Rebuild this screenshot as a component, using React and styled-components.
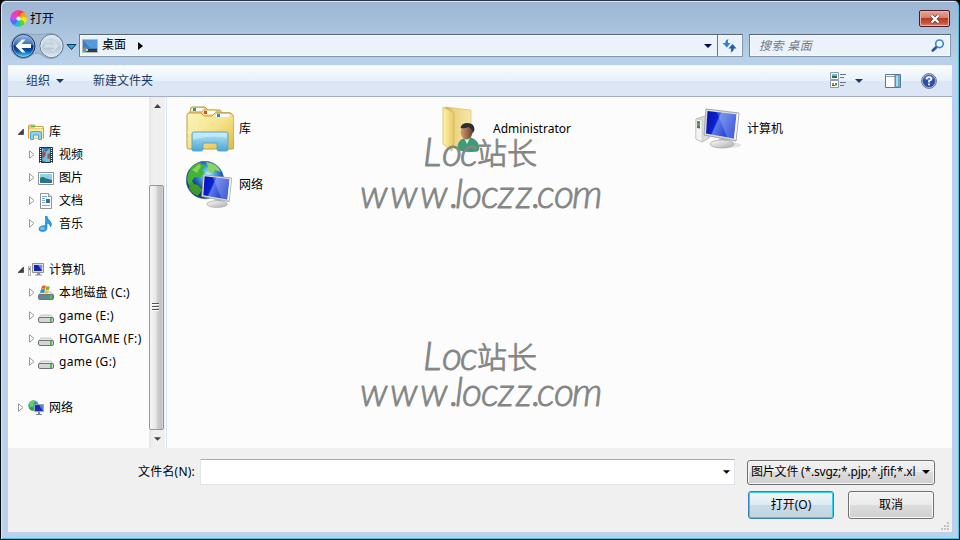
import React from "react";
import styled, { createGlobalStyle } from "styled-components";

const Global = createGlobalStyle`
  * { box-sizing: border-box; }
  body { margin: 0; background: #000; overflow: hidden; }
  svg { display: block; flex: none; }
`;

const Window = styled.div`
  position: relative;
  width: 960px;
  height: 540px;
  display: flex;
  flex-direction: column;
  padding: 1px 7px 7px 7px;
  border: 1px solid #07090c;
  border-top-color: #2b3440;
  border-radius: 6px 6px 0 0;
  background: linear-gradient(#9ab4d2 0, #a9c3de 28px, #b9d1ea 60px, #b9d1ea 100%);
  box-shadow: inset 1px 1px 0 #dbe8f5, inset -1px -1px 0 #35cbe6;
  font: 12px/16px "Noto Sans", "Noto Sans CJK SC", sans-serif;
  color: #000;
  white-space: nowrap;
`;

const TitleBar = styled.header`
  height: 31px;
  display: flex;
  align-items: flex-start;
  padding: 8px 0 0 2px;
`;
const TitleText = styled.span`
  margin-left: 3px;
  flex: 1;
  line-height: 17px;
`;
const CloseButton = styled.button`
  width: 31px;
  height: 17px;
  margin-right: 2px;
  padding: 0;
  display: grid;
  place-items: center;
  border: 1px solid #4e1a25;
  border-radius: 2px;
  background: linear-gradient(#e5a49b 0, #d4806f 46%, #ba3c25 50%, #c5543d 80%, #d98c76 100%);
  box-shadow: inset 0 0 0 1px #e8b4a8;
`;

const NavRow = styled.div`
  height: 32px;
  display: flex;
  align-items: flex-start;
`;
const Field = styled.div`
  display: flex;
  align-items: center;
  height: 23px;
  border: 1px solid #8496a9;
  border-top-color: #566576;
  border-left-color: #6f8093;
  background: #ebf2fa;
  box-shadow: inset 0 0 0 1px #f6fafd;
`;
const AddressBar = styled(Field)`
  margin: 1px 0 0 2px;
  width: 664px;
  padding-left: 2px;
`;
const Crumb = styled.span`
  margin: -1px 12px 0 4px;
`;
const Refresh = styled.span`
  height: 21px;
  width: 25px;
  margin-left: 5px;
  padding-right: 2px;
  display: grid;
  place-items: center;
  border-left: 1px solid #66768a;
`;
const SearchBox = styled(Field)`
  margin: 1px 0 0 6px;
  width: 202px;
  padding: 0 5px 0 9px;
  justify-content: space-between;
  color: #747a82;
  font-style: italic;
  letter-spacing: 0.4px;
`;
const Spacer = styled.span`
  flex: 1;
`;

const Client = styled.main`
  width: 944px;
  flex: 1;
  display: flex;
  flex-direction: column;
  min-height: 0;
  background: #f0f0f0;
`;
const Toolbar = styled.div`
  height: 32px;
  display: flex;
  align-items: center;
  padding: 0 15px 1px 18px;
  border-top: 1px solid #ecf4fc;
  border-bottom: 1px solid #a0afc3;
  background: linear-gradient(#fafcff 0, #e8f1fb 48%, #dce7f5 52%, #dce6f4 100%);
  color: #1e395b;
`;
const ToolLabel = styled.span`
  margin-right: ${(p) => p.$gap}px;
  line-height: 30px;
`;
const ToolIcon = styled.span`
  margin-left: ${(p) => p.$gap}px;
`;

const Body = styled.div`
  position: relative;
  height: 351px;
  display: flex;
  background: #fcfcfc;
`;
const Tree = styled.nav`
  width: 141px;
  padding-top: 23px;
`;
const TreeRow = styled.div`
  height: 23px;
  display: flex;
  align-items: center;
  padding-left: ${(p) => (p.$level ? 21 : 10)}px;
  margin-top: ${(p) => (p.$group ? 23 : 0)}px;
`;
const TreeText = styled.span`
  margin-left: 5px;
  letter-spacing: ${(p) => p.$track || 0}px;
`;
const TreeIcon = styled.span`
  margin-left: ${(p) => (p.$level ? 3 : 4)}px;
  width: 16px;
  height: 16px;
`;
const ScrollBar = styled.div`
  width: 16px;
  display: flex;
  flex-direction: column;
  background: linear-gradient(90deg, #e6e6e6, #f0f0f0 30%, #eee);
`;
const ScrollArrow = styled.span`
  height: 17px;
  display: grid;
  place-items: center;
`;
const Thumb = styled.span`
  height: 245px;
  width: 15px;
  margin-top: 71px;
  padding-right: 2px;
  display: grid;
  place-items: center;
  border: 1px solid #979797;
  border-radius: 2px;
  background: linear-gradient(90deg, #f6f6f6 0, #e8e8e9 45%, #cfcfd2 58%, #c1c1c5 90%, #dedee0 100%);
`;
const Divider = styled.span`
  width: 1px;
  margin-left: 1px;
  background: #d3e4f5;
`;
const Files = styled.section`
  display: grid;
  grid-template-columns: repeat(3, 254px);
  grid-auto-rows: 56px;
  align-content: start;
  padding: 4px 0 0 19px;
`;
const FileItem = styled.div`
  display: flex;
  align-items: center;
  gap: 5px;
`;
const Watermark = styled.svg`
  position: absolute;
  left: 332px;
  top: ${(p) => p.$top}px;
  pointer-events: none;
  fill: #848684;
  stroke: #848684;
  stroke-width: 0.9px;
  stroke-linejoin: round;
  font: italic 300 39px Lato, sans-serif;
`;

const Footer = styled.footer`
  display: flex;
  flex-direction: column;
  gap: 6px;
  padding: 11px 17px 0 130px;
`;
const FooterRow = styled.div`
  display: flex;
  align-items: center;
  justify-content: ${(p) => (p.$end ? "flex-end" : "flex-start")};
  padding-right: ${(p) => (p.$end ? 1 : 0)}px;
`;
const NameLabel = styled.label`
  width: 62px;
  letter-spacing: 0.2px;
`;
const Combo = styled.div`
  width: 535px;
  height: 26px;
  display: flex;
  align-items: center;
  justify-content: flex-end;
  padding-right: 4px;
  border: 1px solid #e2e3ea;
  border-top-color: #abadb3;
  border-radius: 1px;
  background: #fff;
`;
const TypeSelect = styled.div`
  width: 188px;
  height: 25px;
  margin-left: 12px;
  padding: 0 4px 0 3px;
  display: flex;
  align-items: center;
  justify-content: space-between;
  border: 1px solid #707070;
  border-radius: 3px;
  background: linear-gradient(#f2f2f2 0, #ebebeb 48%, #dddddd 50%, #cfcfcf 100%);
  box-shadow: inset 0 0 0 1px #f8f8f8;
`;
const TypeText = styled.span`
  width: 165px;
  overflow: hidden;
  letter-spacing: -0.2px;
`;
const Button = styled.button`
  width: 86px;
  height: 28px;
  margin-left: ${(p) => (p.$primary ? 0 : 14)}px;
  padding: 0;
  font: inherit;
  color: #000;
  border: 1px solid ${(p) => (p.$primary ? "#3c7fb1" : "#707070")};
  border-radius: 3px;
  background: ${(p) =>
    p.$primary
      ? "linear-gradient(#eef5f9 0, #dfebf2 48%, #c9dbe6 50%, #c0d4e0 100%)"
      : "linear-gradient(#f2f2f2 0, #ebebeb 48%, #dddddd 50%, #cfcfcf 100%)"};
  box-shadow: inset 0 0 0 ${(p) => (p.$primary ? "1px #35cdf4" : "1px #fafafa")};
`;
const Grip = styled.svg`
  position: absolute;
  right: 9px;
  bottom: 8px;
`;

const Down = ({ w = 7, fill = "#000" }) => (
  <svg width={w} height="4" viewBox="0 0 8 4">
    <path d="M0 0h8L4 4z" fill={fill} />
  </svg>
);

const AppLogo = () => (
  <svg width="17" height="17" viewBox="-8.5 -8.5 17 17">
    {["#f44336", "#ff9b12", "#f6e51b", "#52d63c", "#1abaf0", "#536df2", "#c44df2", "#f43bab"].map((c, i) => (
      <path key={c} d="M0-2.2C-2-4-2-6.5 0-8Q3.5-8 5.8-5.8Q3-3 1.8-1.8Z" fill={c} stroke={c} strokeWidth=".5" transform={`rotate(${i * 45})`} />
    ))}
    <circle r="2" fill="#e9f0f6" />
  </svg>
);

const NavButtons = () => (
  <svg width="69" height="29" viewBox="8 33 69 29">
    <defs>
      <linearGradient id="nb" x2="0" y2="1">
        <stop stopColor="#98b9e3" />
        <stop offset=".43" stopColor="#3c73b8" />
        <stop offset=".5" stopColor="#063282" />
        <stop offset=".72" stopColor="#0955ab" />
        <stop offset="1" stopColor="#4de4ff" />
      </linearGradient>
      <linearGradient id="nf" x2="0" y2="1">
        <stop stopColor="#dce7f1" />
        <stop offset=".48" stopColor="#c4d3e2" />
        <stop offset=".54" stopColor="#b6c6d7" />
        <stop offset="1" stopColor="#dce9f4" />
      </linearGradient>
    </defs>
    <path d="M23 33.500Q37 36 51 33.500A12.500 12.500 0 1 1 42 55Q37 51 32 55A12.500 12.500 0 1 1 23 33.500" fill="#a4bad1" stroke="#8ba1b9" />
    <circle cx="23.500" cy="46" r="11.500" fill="url(#nb)" stroke="#16305c" />
    <circle cx="23.500" cy="46" r="10.500" fill="none" stroke="#b6d6f3" strokeWidth=".8" opacity=".7" />
    <path d="M15.500 46l6.500-6.500h3.500L21.500 44H31v4h-9.500l4 4.500H22z" fill="#fff" />
    <circle cx="51.500" cy="46" r="11.500" fill="url(#nf)" stroke="#63758a" />
    <circle cx="51.500" cy="46" r="10.500" fill="none" stroke="#e6eff7" />
    <path d="M59.500 46L53 39.500h-3.500l4 4.500H44v4h9.500l-4 4.500H53z" fill="#d2dde8" stroke="#b3c3d4" strokeWidth=".6" />
    <path d="M67 44.500h9l-4.500 5z" fill="#38a5d6" stroke="#0b3563" />
  </svg>
);

const DesktopIcon = () => (
  <svg width="16" height="14" viewBox="0 0 16 14">
    <path d="M.5.500h15v13H.5z" fill="#397dc2" stroke="#bbb9b6" />
    <path d="M1 1h14v8H8z" fill="#5599d9" />
    <path d="M1 10h14v3H1z" fill="#333b46" />
    <path d="M1 10l3-2 2 3-2 2H1z" fill="#37a5ed" />
    <path d="M2 9h2v2H2z" fill="#ec6c3b" /><path d="M4 10h2v2H4z" fill="#d1e559" />
  </svg>
);

const RefreshIcon = () => (
  <svg width="15" height="14" viewBox="0 0 15 14">
    <path d="M6.500 0C4 .8 3.300 2 3.300 4H.5L5 8.500 8.500 4H6q-.5-2 .5-4z" fill="#2d83cd" />
    <path d="M8.500 13.500c2.500-.8 3.300-2 3.300-4h2.700L10.500 5 6.500 9.500H9q.5 2-.5 4z" fill="#255c9f" />
  </svg>
);
const SearchIcon = () => (
  <svg width="14" height="13" viewBox="0 0 14 13">
    <path d="M6 7.500L1.800 11.500" stroke="#2855a0" strokeWidth="2.600" strokeLinecap="round" />
    <circle cx="8.500" cy="4.800" r="3.800" fill="#f0f8ff" stroke="#3b83c7" strokeWidth="1.600" />
  </svg>
);
const ViewIcon = () => (
  <svg width="16" height="17" viewBox="0 0 16 17">
    {[0.5, 8.5].map((y) => (
      <g key={y}>
        <path d={`M.5 ${y}h8v7h-8z`} fill="#fff" stroke="#8f99a8" />
        <path d={`M10 ${y + 2}h6M10 ${y + 5}h4`} stroke="#61758d" />
      </g>
    ))}
    <path d="M2 2h5v2H2z" fill="#74b8d7" /><path d="M2 4h5v2H2z" fill="#256d4c" />
    <path d="M2 11h2v2H2z" fill="#e47739" /><path d="M5 11h2v2H5z" fill="#3b9a3d" />
    <path d="M2 13h3v1H2z" fill="#c62e24" /><path d="M5 13h2v1H5z" fill="#eac83f" />
  </svg>
);
const PaneIcon = () => (
  <svg width="16" height="14" viewBox="0 0 16 14">
    <path d="M.5.500h15v13H.5z" fill="#fff" stroke="#60758e" />
    <path d="M1 2.500h9" stroke="#8b9caf" />
    <path d="M10 1h5v12h-5z" fill="#65b3d1" />
    <path d="M11 2h2v10h-2z" fill="#a8dcea" /><path d="M10 1v12" stroke="#60758e" />
  </svg>
);
const HelpIcon = () => (
  <svg width="16" height="16" viewBox="0 0 16 16">
    <circle cx="8" cy="8" r="7.400" fill="#ced4df" stroke="#677488" />
    <circle cx="8" cy="8" r="6" fill="#294fb1" stroke="#233b82" strokeWidth=".6" />
    <path d="M3 6a5.300 5.300 0 0 1 10 0Q8 8 3 6" fill="#5c83d5" />
    <path d="M5.700 6.200Q5.700 4 8 4t2.300 2.200Q10.300 7.400 8 8v1.500" fill="none" stroke="#fff" strokeWidth="1.700" />
    <path d="M7.100 10.500h1.800v1.800H7.100z" fill="#fff" />
  </svg>
);
const Expander = ({ open }) => (
  <svg width="6" height="9" viewBox="0 0 6 9">
    {open ? <path d="M5.500 2v5.500H0z" fill="#404040" stroke="#262626" strokeWidth=".6" /> : <path d="M.5.700v7.600L5 4.500z" fill="#fff" stroke="#9a9a9a" />}
  </svg>
);

const LibraryArt = () => (
  <svg width="48" height="48" viewBox="0 0 48 48">
    <defs>
      <linearGradient id="ly" x2="1" y2="1"><stop stopColor="#fdf5b9" /><stop offset=".5" stopColor="#f5e28b" /><stop offset="1" stopColor="#e1b93c" /></linearGradient>
      <linearGradient id="lb" x2="0" y2="1"><stop stopColor="#bfe6f5" /><stop offset=".5" stopColor="#83c7e6" /><stop offset="1" stopColor="#4ba5d0" /></linearGradient>
    </defs>
    <path d="M3 11l2-8q0-1 1-1h13l3 3h12l2 3h8l3 4v28H3z" fill="#e8cc72" stroke="#bd9840" />
    <path d="M6 3h11l2 3H5z" fill="#fff" /><path d="M7 3h3v3H7z" fill="#3b9d43" />
    <path d="M15 9l2-4h13l2 3h12v6H15z" fill="#f4e3a0" stroke="#c5a550" strokeWidth=".7" />
    <path d="M18 6h11v3H18z" fill="#fff" /><path d="M18 6h3v3h-3z" fill="#d64c29" />
    <path d="M1 10q0-2 2-2h12l3 3h8l3-3h16l3 4v31q0 1-2 1H3q-2 0-2-2z" fill="url(#ly)" stroke="#c49d3a" />
    <path d="M30 9h13v3H30z" fill="#fff" /><path d="M31 9h3v3h-3z" fill="#318bc4" />
    <path d="M10 30L5 19M10 30l1-14M10 30l8-9M10 30l-9-3M10 30l-7 9M10 30l-9 5" stroke="#fffbe1" strokeWidth=".6" opacity=".8" />
    <path d="M6 45V29q0-2 2-2h32q2 0 2 2v16q0 1-2 1h-7q-2 0-2-2v-6H17v6q0 2-2 2H8q-2 0-2-1z" fill="url(#lb)" stroke="#58a8ce" />
    <path d="M7 35V28h34v5Q24 29 7 35z" fill="#d7f1fa" opacity=".55" />
  </svg>
);
const LibraryIcon = () => (
  <svg width="16" height="16" viewBox="0 0 16 16">
    <path d="M.5 2q0-1 1-1h5l1.500 1.500h6.500q1 0 1 1V14H.5z" fill="#e9ce78" stroke="#c5a34e" />
    <path d="M3 2h4v1H3z" fill="#55b544" /><path d="M7 3h7v1H7z" fill="#fff" />
    <path d="M1 5h14v9H1z" fill="#f8e99f" />
    <path d="M2.500 15.500V9q0-1.500 1.500-1.500h8q1.500 0 1.500 1.500v6.500h-3V11h-5v4.500z" fill="#8fd2ee" stroke="#4fa8d2" />
  </svg>
);

const Monitor = ({ tower }) => (
  <g>
    <defs>
      <linearGradient id="mb" x2="1" y2=".4"><stop stopColor="#0613a8" /><stop offset=".42" stopColor="#0a22d2" /><stop offset=".47" stopColor="#5b78e8" /><stop offset="1" stopColor="#1834cf" /></linearGradient>
      <linearGradient id="mg" x2="1" y2="1"><stop stopColor="#fff" /><stop offset="1" stopColor="#aaa" /></linearGradient>
    </defs>
    {tower && (
      <g>
        <path d="M2 12l9-3 4 1v21l-7 4-6-3z" fill="#dbdbdb" stroke="#a5a5a5" strokeWidth=".7" />
        <path d="M2 12l6 1v22l-6-3z" fill="#f4f4f4" stroke="#b6b6b6" strokeWidth=".5" />
        <path d="M3 14l3 .500v7L3 21z" fill="#666" /><path d="M3 16h3v3H3z" fill="#32bf34" />
        <ellipse cx="33" cy="38" rx="14" ry="3" fill="#bbb" opacity=".4" />
      </g>
    )}
    <path d="M25 31l8 1v6h-7z" fill="#c5c5c5" />
    <ellipse cx="28" cy="37" rx="12" ry="4" fill="url(#mg)" stroke="#aaa" strokeWidth=".8" />
    <path d="M12 2l33 4-3 28-32-6z" fill="#dcdcdc" stroke="#949494" strokeWidth=".8" />
    <path d="M13.500 4l29 3.500-2.500 24-28-5z" fill="url(#mb)" />
    <path d="M23 5.200l19.500 2.300-2.500 24-7-1.200Z" fill="#c5d8ff" opacity=".3" />
    <path d="M42.500 7.500l2-1L41.500 33l-1.500-1.500z" fill="#f9f9f9" />
  </g>
);
const ComputerArt = () => (
  <svg width="48" height="48" viewBox="0 0 48 48"><g transform="translate(0 2)"><Monitor tower /></g></svg>
);
const NetworkArt = () => (
  <svg width="48" height="48" viewBox="0 0 48 48">
    <defs>
      <radialGradient id="gl" cx=".58" cy=".35"><stop stopColor="#b7f3ff" /><stop offset=".35" stopColor="#4faee1" /><stop offset=".75" stopColor="#1c58ae" /><stop offset="1" stopColor="#12367f" /></radialGradient>
    </defs>
    <circle cx="19" cy="19" r="18.700" fill="url(#gl)" stroke="#315f98" strokeWidth=".6" />
    <path d="M5 7Q10 1 15 2l4 4-3 4 3 1-5 6-5-1-3 4 3 5-3 3Q-1 21 2 13z" fill="#43b335" />
    <path d="M4 22l8 2 4 5-4 6Q5 32 3 27z" fill="#3f9b2b" />
    <path d="M20 1Q31 2 35 11l-6-2-2 4-6-4 1-4z" fill="#8bd267" /><path d="M6 9l7-6 2 2-4 7z" fill="#a8e15c" opacity=".7" />
    <g transform="translate(7 12) scale(.86 .84)"><Monitor /></g>
  </svg>
);
const UserFolder = () => (
  <svg width="48" height="48" viewBox="-2 0 48 48">
    <defs>
      <linearGradient id="uf" x2="1"><stop stopColor="#fff2aa" /><stop offset="1" stopColor="#e7c967" /></linearGradient>
      <linearGradient id="ub"><stop stopColor="#c6a655" /><stop offset=".35" stopColor="#ecd383" /><stop offset="1" stopColor="#f7e7a5" /></linearGradient>
      <linearGradient id="us" x2="1"><stop stopColor="#cfa079" /><stop offset="1" stopColor="#6d4229" /></linearGradient>
    </defs>
    <path d="M3 2l26 3v32L12 43z" fill="url(#ub)" stroke="#d8b961" strokeWidth=".6" />
    <path d="M1 2l11 6v29l-2 9-9-7z" fill="url(#uf)" stroke="#d6b64d" strokeWidth=".7" />
    <path d="M16 43q0-8 6-9l3-1h4q7 2 8 10l-1 3q-10 2-19-1z" fill="#3e9b75" stroke="#25785b" strokeWidth=".6" />
    <path d="M22 33l3 6 3-6z" fill="#ddf0e8" />
    <ellipse cx="24.500" cy="27" rx="5.800" ry="7.500" fill="url(#us)" />
    <path d="M18.500 23q1-5 7-5 7 0 7 7l-2 4q0-5-4-7-4 2-8 1z" fill="#2b2e31" />
  </svg>
);

const VideoIcon = () => (
  <svg width="16" height="16" viewBox="0 0 16 16">
    <path d="M1.500.500h13v15h-13z" fill="#273c44" stroke="#243238" />
    <path d="M4 1h8v14H4z" fill="#347bb6" /><path d="M4 1l4 4 4-4v5l-3 2 3 3v4H8l-4-2 3-5-3-3z" fill="#6ebde2" />
    <path d="M5 3l3 3-1 4-3-2zM11 6l-2 5 3 1z" fill="#aa503e" />
    <path d="M2.500 1v15M13.500 1v15" stroke="#fff" strokeWidth="1.200" strokeDasharray="1 1" />
  </svg>
);
const PictureIcon = () => (
  <svg width="16" height="16" viewBox="0 0 16 16">
    <path d="M.5 2.500h15v12H.5z" fill="#fff" stroke="#88919a" />
    <path d="M2 4h12v9H2z" fill="#8dd0ef" /><path d="M2 8q3-2 5 0l7 2v3H2z" fill="#2d7964" /><path d="M2 11q5-3 12 0v2H2z" fill="#28729c" />
  </svg>
);
const DocumentIcon = () => (
  <svg width="16" height="16" viewBox="0 0 16 16">
    <path d="M2.500.500h8l3 3v12h-11z" fill="#fff" stroke="#8d969e" /><path d="M10.500.500v3h3" fill="#e1e9ef" stroke="#8d969e" />
    <path d="M4 3.500h5M4 5.500h3M4 7.500h3M4 9.500h3M4 12.500h8" stroke="#7faed1" /><path d="M8 6h4v4H8z" fill="#2674ad" />
  </svg>
);
const MusicIcon = () => (
  <svg width="16" height="16" viewBox="0 0 16 16">
    <path d="M7.500 0h1.500q0 2.500 2.500 4.500 3.500 3 1 6.500 0-3-3.500-4v5q0 3.500-4.500 3.500-3.500 0-3.500-2.500 0-3.500 6.500-3.500z" fill="#2e9be0" stroke="#1669ae" strokeWidth=".5" /><ellipse cx="4.500" cy="12.500" rx="2.500" ry="1.500" fill="#69c7f6" />
  </svg>
);
const PcIcon = () => (
  <svg width="16" height="16" viewBox="0 0 16 16">
    <path d="M.5 4.500h2v9h-2z" fill="#eee" stroke="#999" strokeWidth=".7" /><path d="M1 6h1v2H1z" fill="#2ca53a" />
    <path d="M4.500 1.500h11v9h-11z" fill="#dedede" stroke="#929292" /><path d="M6 3h8v6H6z" fill="#1326b1" /><path d="M10 3h4v6z" fill="#6c88eb" /><path d="M9 11h3v1.500h2v1H7v-1h2z" fill="#8d9399" />
  </svg>
);
const Drive = ({ system }) => (
  <svg width="16" height="16" viewBox="0 0 16 16">
    <path d="M3 7h10l2.500 3H.5z" fill="#e5e8e8" stroke="#a5aaab" strokeWidth=".6" />
    <path d="M.5 11q0-1.500 1.500-1.500h12q1.500 0 1.500 1.500v2q0 1.500-1.500 1.500H2Q.5 14.500.5 13z" fill={system ? "#5d8992" : "#d4d7d8"} stroke="#6f7576" />
    <path d="M12 10h2v4h-2z" fill="#4cc635" />
    {system && <g><path d="M4 1q2-1 4 0L7 4Q5 3 3 4z" fill="#ef5a23" /><path d="M8.500 1q2 1 3.500 0l-1 3.500q-2 1-3.500 0z" fill="#78b928" /><path d="M3 4.500q2-1 4 0L6 8Q4 7 2 8z" fill="#238ace" /><path d="M7.500 5q2 1 3.500 0l-1 3q-2 1-3.500 0z" fill="#f3bf21" /></g>}
  </svg>
);
const NetIcon = () => (
  <svg width="16" height="16" viewBox="0 0 16 16">
    <circle cx="5.500" cy="5.500" r="5.200" fill="#3299c9" /><path d="M1 3q3-4 6-2L5 4l1 2-4 1z" fill="#6ad549" /><path d="M1 8h4v3Q2 10 1 8" fill="#2fa13c" />
    <path d="M6.500 4.500h9v7h-9z" fill="#162bb7" stroke="#9ba4b0" /><path d="M11 5h4v6z" fill="#5c7be4" /><path d="M10 12h2v2h2v1H8v-1h2z" fill="#7a8a9c" />
  </svg>
);

const tree = [
  { text: "库", icon: <LibraryIcon />, open: true },
  { text: "视频", icon: <VideoIcon />, level: 1 },
  { text: "图片", icon: <PictureIcon />, level: 1 },
  { text: "文档", icon: <DocumentIcon />, level: 1 },
  { text: "音乐", icon: <MusicIcon />, level: 1 },
  { text: "计算机", icon: <PcIcon />, open: true, group: true },
  { text: "本地磁盘 (C:)", icon: <Drive system />, level: 1, track: 0.2 },
  { text: "game (E:)", icon: <Drive />, level: 1, track: 0.3 },
  { text: "HOTGAME (F:)", icon: <Drive />, level: 1, track: 0.38 },
  { text: "game (G:)", icon: <Drive />, level: 1, track: 0.3 },
  { text: "网络", icon: <NetIcon />, group: true },
];
const files = [
  { text: "库", icon: <LibraryArt /> },
  { text: "Administrator", icon: <UserFolder /> },
  { text: "计算机", icon: <ComputerArt /> },
  { text: "网络", icon: <NetworkArt /> },
];

const Mark = ({ top, second }) => (
  <Watermark width="300" height="90" $top={top}>
    <text x="83 102 120" y="38.500">Loc</text>
    <text x="137 167" y="37" fontFamily="Noto Sans CJK SC" fontStyle="normal" fontSize="30">站长</text>
    <text x="20 50 80 110 115 122 141 158 176 192 197 214 232" y={second}>www.loczz.com</text>
  </Watermark>
);

export default function App() {
  return (
    <>
      <Global />
      <Window>
        <TitleBar>
          <AppLogo />
          <TitleText>打开</TitleText>
          <CloseButton aria-label="关闭">
            <svg width="12" height="10" viewBox="0 0 12 10">
              <path d="M2.500 1.500l7 7M9.500 1.500l-7 7" stroke="#54404a" strokeWidth="3.800" />
              <path d="M2.500 1.500l7 7M9.500 1.500l-7 7" stroke="#fff" strokeWidth="2.200" />
            </svg>
          </CloseButton>
        </TitleBar>
        <NavRow>
          <NavButtons />
          <AddressBar>
            <DesktopIcon />
            <Crumb>桌面</Crumb>
            <svg width="5" height="8" viewBox="0 0 5 8"><path d="M0 0v8l5-4z" /></svg>
            <Spacer />
            <Down w={8} fill="#06065e" />
            <Refresh><RefreshIcon /></Refresh>
          </AddressBar>
          <SearchBox>搜索 桌面<SearchIcon /></SearchBox>
        </NavRow>
        <Client>
          <Toolbar>
            <ToolLabel $gap={6}>组织</ToolLabel>
            <Down w={8} fill="#1e395b" />
            <ToolLabel $gap={0}><ToolIcon $gap={29}>新建文件夹</ToolIcon></ToolLabel>
            <Spacer />
            <ViewIcon />
            <ToolIcon $gap={9}><Down w={8} fill="#1e395b" /></ToolIcon>
            <ToolIcon $gap={22}><PaneIcon /></ToolIcon>
            <ToolIcon $gap={20}><HelpIcon /></ToolIcon>
          </Toolbar>
          <Body>
            <Tree>
              {tree.map((t, i) => (
                <TreeRow key={i} $level={t.level} $group={t.group}>
                  <Expander open={t.open} />
                  <TreeIcon $level={t.level}>{t.icon}</TreeIcon>
                  <TreeText $track={t.track}>{t.text}</TreeText>
                </TreeRow>
              ))}
            </Tree>
            <ScrollBar>
              <ScrollArrow><svg width="7" height="4" viewBox="0 0 7 4"><path d="M0 4h7L3.500 0z" fill="#444" /></svg></ScrollArrow>
              <Thumb><svg width="8" height="9" viewBox="0 0 8 9"><path d="M0 .5h7M0 3.500h7M0 6.500h7" stroke="#555" /><path d="M0 1.500h7M0 4.500h7M0 7.500h7" stroke="#fff" /></svg></Thumb>
              <ScrollArrow><Down fill="#444" /></ScrollArrow>
            </ScrollBar>
            <Divider />
            <Files>
              {files.map((f) => (
                <FileItem key={f.text}>{f.icon}<span>{f.text}</span></FileItem>
              ))}
            </Files>
            <Mark top={30} second={81} />
            <Mark top={234} second={75} />
          </Body>
          <Footer>
            <FooterRow>
              <NameLabel>文件名(N):</NameLabel>
              <Combo><Down /></Combo>
              <TypeSelect><TypeText>图片文件 (*.svgz;*.pjp;*.jfif;*.xl</TypeText><Down w={8} /></TypeSelect>
            </FooterRow>
            <FooterRow $end>
              <Button $primary>打开(O)</Button>
              <Button>取消</Button>
            </FooterRow>
          </Footer>
        </Client>
        <Grip width="9" height="9" viewBox="0 0 9 9">
          <path d="M6 0h2v2H6zM3 3h2v2H3zM6 3h2v2H6zM0 6h2v2H0zM3 6h2v2H3zM6 6h2v2H6z" fill="#c2c2c2" />
        </Grip>
      </Window>
    </>
  );
}
